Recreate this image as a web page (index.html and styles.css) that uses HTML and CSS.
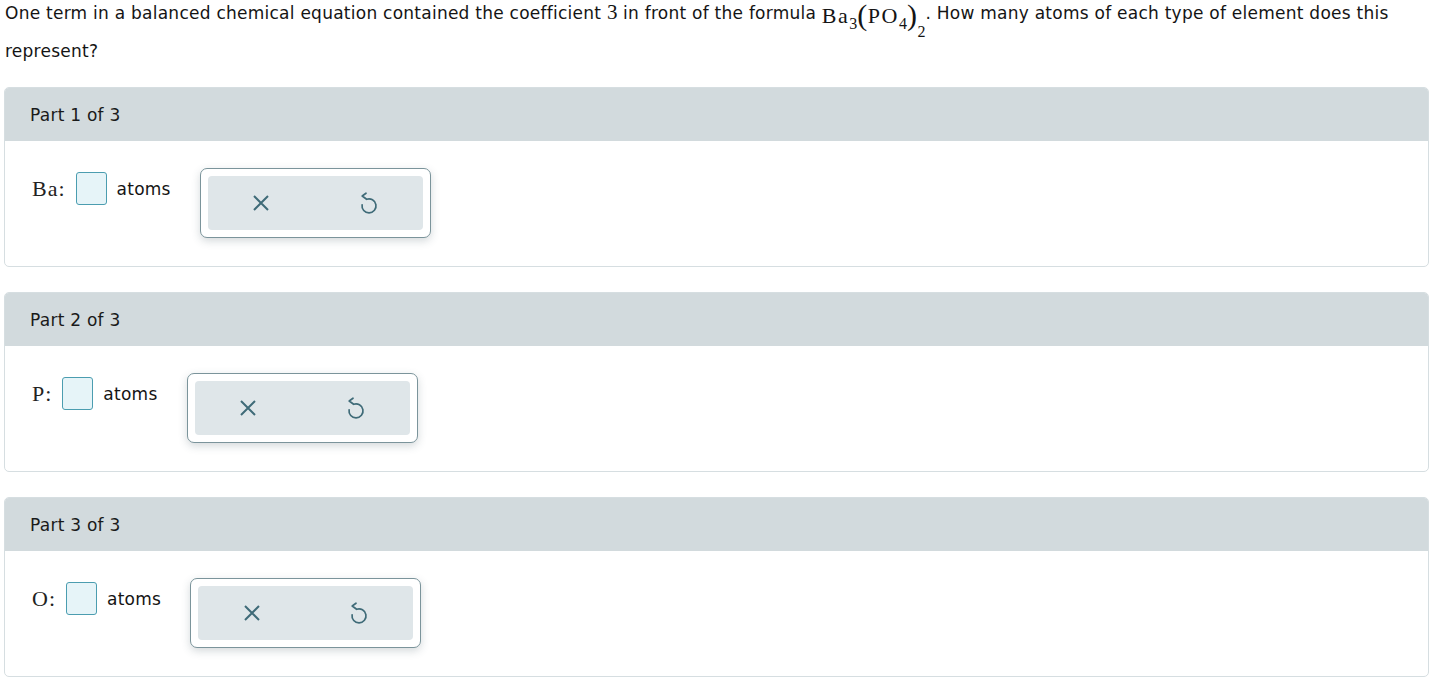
FILE: index.html
```html
<!DOCTYPE html>
<html>
<head>
<meta charset="utf-8">
<link rel="stylesheet" href="styles.css">
</head>
<body>
<div class="page">
  <p class="question">One term in a balanced chemical equation contained the coefficient <span class="math">3</span> in front of the formula <span class="math formula">Ba<span class="sub">3</span><span class="paren">(</span>PO<span class="sub">4</span><span class="paren">)</span><span class="sub sub2">2</span></span>. How many atoms of each type of element does this represent?</p>

  <section class="card">
    <div class="card-head">Part 1 of 3</div>
    <div class="card-body">
      <div class="answer-row">
        <span class="elem">Ba:</span>
        <span class="box"></span>
        <span class="unit">atoms</span>
        <div class="tools">
          <div class="tools-inner">
            <button class="tool"><svg width="18" height="18" viewBox="0 0 18 18"><path d="M2 2 L16 16 M16 2 L2 16" stroke="#3f6b78" stroke-width="2" fill="none"/></svg></button>
            <button class="tool"><svg width="20" height="22" viewBox="0 0 20 22"><path d="M3.1 12.8 A7 7 0 1 0 7.6 7.3 L3.2 4 L7 1.2" stroke="#3f6b78" stroke-width="1.7" fill="none" stroke-linecap="round" stroke-linejoin="round"/></svg></button>
          </div>
        </div>
      </div>
    </div>
  </section>

  <section class="card">
    <div class="card-head">Part 2 of 3</div>
    <div class="card-body">
      <div class="answer-row">
        <span class="elem">P:</span>
        <span class="box"></span>
        <span class="unit">atoms</span>
        <div class="tools">
          <div class="tools-inner">
            <button class="tool"><svg width="18" height="18" viewBox="0 0 18 18"><path d="M2 2 L16 16 M16 2 L2 16" stroke="#3f6b78" stroke-width="2" fill="none"/></svg></button>
            <button class="tool"><svg width="20" height="22" viewBox="0 0 20 22"><path d="M3.1 12.8 A7 7 0 1 0 7.6 7.3 L3.2 4 L7 1.2" stroke="#3f6b78" stroke-width="1.7" fill="none" stroke-linecap="round" stroke-linejoin="round"/></svg></button>
          </div>
        </div>
      </div>
    </div>
  </section>

  <section class="card">
    <div class="card-head">Part 3 of 3</div>
    <div class="card-body">
      <div class="answer-row">
        <span class="elem">O:</span>
        <span class="box"></span>
        <span class="unit">atoms</span>
        <div class="tools">
          <div class="tools-inner">
            <button class="tool"><svg width="18" height="18" viewBox="0 0 18 18"><path d="M2 2 L16 16 M16 2 L2 16" stroke="#3f6b78" stroke-width="2" fill="none"/></svg></button>
            <button class="tool"><svg width="20" height="22" viewBox="0 0 20 22"><path d="M3.1 12.8 A7 7 0 1 0 7.6 7.3 L3.2 4 L7 1.2" stroke="#3f6b78" stroke-width="1.7" fill="none" stroke-linecap="round" stroke-linejoin="round"/></svg></button>
          </div>
        </div>
      </div>
    </div>
  </section>
</div>
</body>
</html>
```
FILE: styles.css
```css
html, body {
  margin: 0;
  padding: 0;
  background: #ffffff;
}
body {
  font-family: "DejaVu Sans", Verdana, sans-serif;
  font-size: 17px;
  letter-spacing: 0.25px;
  color: #141414;
}
.page {
  padding: 0 12px 0 4px;
}
.question {
  margin: 0 0 24px 0;
  padding-left: 1px;
  line-height: 24px;
}
.math {
  font-family: "Liberation Serif", "Times New Roman", serif;
  font-size: 21px;
  letter-spacing: 0;
}
.formula {
  display: inline-block;
  line-height: 22px;
  height: 24px;
  vertical-align: top;
  padding-bottom: 15px;
  font-size: 22px;
  letter-spacing: 1.5px;
}
.paren {
  font-size: 30px;
  vertical-align: -2px;
  line-height: 1;
  letter-spacing: 0.5px;
}
.sub {
  font-size: 16px;
  vertical-align: -6px;
  line-height: 1;
  letter-spacing: 0;
}
.sub2 {
  vertical-align: -14px;
}
.card {
  border: 1px solid #d6dee1;
  border-radius: 5px;
  overflow: hidden;
  margin-bottom: 25px;
}
.card-head {
  background: #d2dadd;
  height: 53px;
  display: flex;
  align-items: center;
  padding-left: 25px;
  color: #1a1a1a;
}
.card-body {
  height: 125px;
  box-sizing: border-box;
  padding: 27px 0 0 27px;
}
.answer-row {
  display: flex;
  align-items: flex-start;
}
.elem {
  font-family: "Liberation Serif", "Times New Roman", serif;
  font-size: 22px;
  letter-spacing: 1px;
  line-height: 33px;
  margin-top: 4px;
  color: #222;
}
.box {
  width: 29px;
  height: 31px;
  border: 1px solid #4b9db0;
  border-radius: 3px;
  background: #e6f4f8;
  margin: 4px 0 0 10px;
}
.unit {
  line-height: 33px;
  margin: 5px 0 0 10px;
}
.tools {
  margin-left: 29px;
  width: 215px;
  height: 54px;
  padding: 7px;
  border: 1px solid #7b949b;
  border-radius: 7px;
  background: #fff;
  box-shadow: 0 3px 8px rgba(60, 80, 90, 0.22);
}
.tools-inner {
  display: flex;
  height: 100%;
  background: #dfe6e9;
  border-radius: 4px;
}
.tool {
  flex: 1;
  border: 0;
  background: transparent;
  padding: 0;
  display: flex;
  align-items: center;
  justify-content: center;
}
.tool svg {
  display: block;
}
```
